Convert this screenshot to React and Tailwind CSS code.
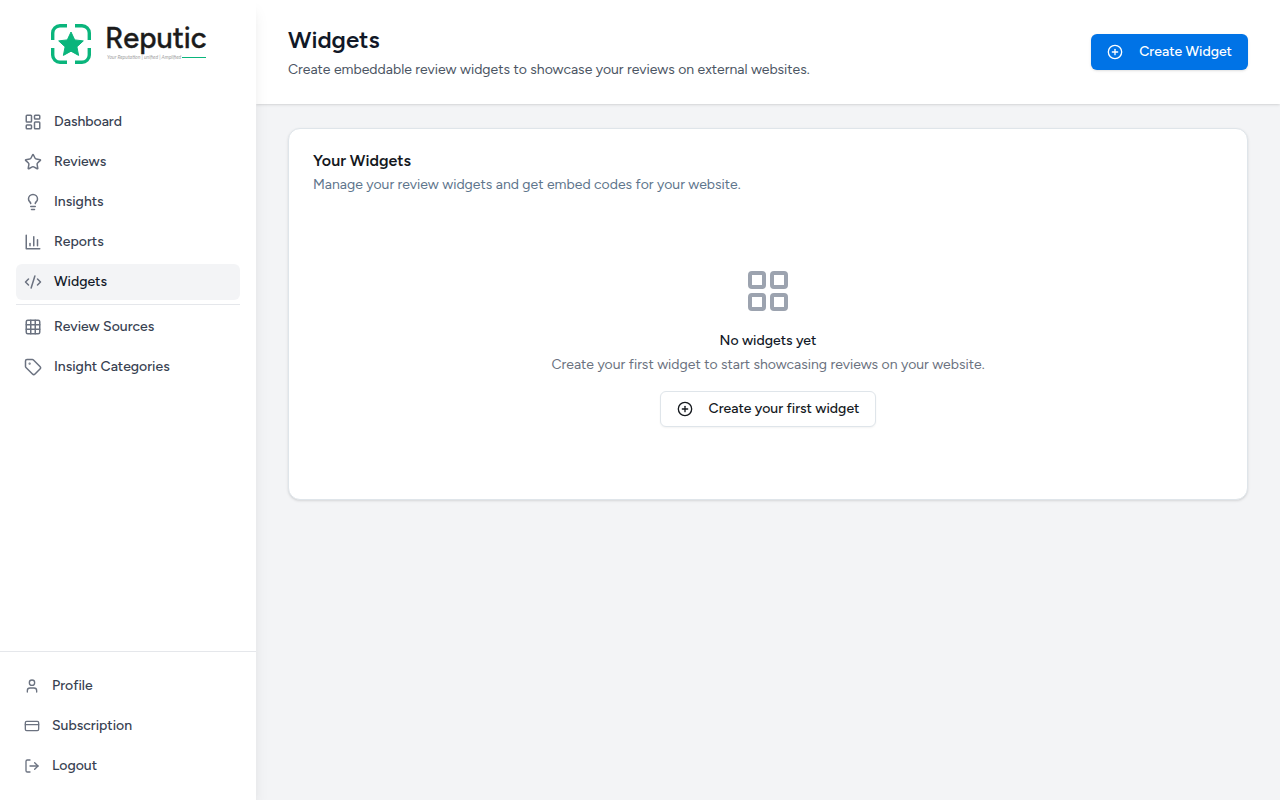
import React from "react";
import { LayoutDashboard, Star, Lightbulb, CodeXml, Grid3x3, Tag, User, CreditCard, LogOut, CirclePlus, LayoutGrid } from "lucide-react";

function ReportsIcon(props) {
  return (
    <svg viewBox="0 0 24 24" fill="none" stroke="currentColor" strokeLinecap="round" strokeLinejoin="round" {...props}>
      <path d="M3 3v18h18" />
      <path d="M18 17V9" />
      <path d="M13 17V5" />
      <path d="M8 17v-3" />
    </svg>
  );
}

const mainItems = [
  { label: "Dashboard", icon: LayoutDashboard },
  { label: "Reviews", icon: Star },
  { label: "Insights", icon: Lightbulb },
  { label: "Reports", icon: ReportsIcon },
  { label: "Widgets", icon: CodeXml, active: true },
];
const setupItems = [
  { label: "Review Sources", icon: Grid3x3 },
  { label: "Insight Categories", icon: Tag },
];
const accountItems = [
  { label: "Profile", icon: User },
  { label: "Subscription", icon: CreditCard },
  { label: "Logout", icon: LogOut },
];

function NavItem({ label, icon: Icon, active, small }) {
  return (
    <a
      href="#"
      aria-current={active ? "page" : undefined}
      className={
        "flex h-9 items-center gap-3 rounded-md px-2 text-sm font-medium " +
        (active ? "bg-[#f3f4f6] text-[#111827]" : "text-[#374151] hover:bg-gray-50")
      }
    >
      <Icon className={"shrink-0 text-[#6b7280] " + (small ? "size-4" : "size-[18px]")} strokeWidth={2} aria-hidden="true" />
      <span>{label}</span>
    </a>
  );
}

function Logo() {
  return (
    <svg viewBox="0 0 156 40" className="h-10 w-[156px] overflow-visible" role="img" aria-label="Reputic">
      <g fill="none" stroke="#0ab57c" strokeWidth="3.4">
        <path d="M2.7 16V9a7.300 7.300 0 0 1 7.300-7.300h7" />
        <path d="M25 1.700h7A7.300 7.300 0 0 1 39.300 9v7" />
        <path d="M39.300 24v7a7.300 7.300 0 0 1-7.300 7.300H25" />
        <path d="M17 38.300H10A7.300 7.300 0 0 1 2.700 31v-7" />
      </g>
      <path
        fill="#0ab57c"
        stroke="#0ab57c"
        strokeLinejoin="round"
        d="M21 8l3.700 7.900 8.600 1-6.400 5.900 1.700 8.600L21 27.200l-7.600 4.200 1.700-8.600-6.400-5.900 8.600-1z"
      />
      <text x="55" y="24" fontFamily="Figtree, Inter, sans-serif" fontSize="29" fontWeight="500" fill="#1b1b1b" stroke="#1b1b1b" strokeWidth="0.4">Reputic</text>
      <text x="57" y="35" fontFamily="Lato, sans-serif" fontStyle="italic" fontSize="5" fill="#a3a3a3">Your Reputation | unified | Amplified</text>
      <path d="M132 33.500h24" stroke="#0ab57c" />
    </svg>
  );
}

export default function App() {
  return (
    <div className="flex min-h-screen bg-[#f3f4f6] font-[Figtree,Lato,sans-serif] text-sm">
      <aside className="relative flex w-64 shrink-0 flex-col bg-white shadow-lg">
        <div className="flex h-[88px] items-center justify-center">
          <Logo />
        </div>
        <nav aria-label="Main" className="flex flex-1 flex-col gap-1 px-4 pt-4">
          {mainItems.map((i) => <NavItem key={i.label} {...i} />)}
          <hr className="border-gray-200" />
          {setupItems.map((i) => <NavItem key={i.label} {...i} />)}
        </nav>
        <nav aria-label="Account" className="flex flex-col gap-1 border-t border-gray-200 p-4">
          {accountItems.map((i) => <NavItem key={i.label} small {...i} />)}
        </nav>
      </aside>
      <div className="min-w-0 flex-1">
        <header className="flex items-center justify-between bg-white px-8 py-6 shadow-sm">
          <div>
            <h1 className="text-2xl font-semibold text-[#111827]">Widgets</h1>
            <p className="mt-1 text-[#4b5563]">Create embeddable review widgets to showcase your reviews on external websites.</p>
          </div>
          <button type="button" className="flex h-9 items-center gap-4 rounded-md bg-[#0073e6] px-4 font-medium text-white shadow-sm">
            <CirclePlus className="size-4" aria-hidden="true" />
            Create Widget
          </button>
        </header>
        <main className="px-8 py-6">
          <section className="rounded-xl border border-[#dfe5ea] bg-white shadow-sm">
            <div className="p-6">
              <h2 className="text-base leading-4 font-semibold text-[#14181d]">Your Widgets</h2>
              <p className="mt-1.5 text-[#5e758c]">Manage your review widgets and get embed codes for your website.</p>
            </div>
            <div className="flex flex-col items-center px-6 pt-12 pb-[72px] text-center">
              <LayoutGrid className="size-12 text-[#9ca3af]" aria-hidden="true" />
              <h3 className="mt-4 font-medium text-[#111827]">No widgets yet</h3>
              <p className="mt-1 text-[#6b7280]">Create your first widget to start showcasing reviews on your website.</p>
              <button type="button" className="mt-4 flex h-9 items-center gap-4 rounded-md border border-[#dfe5ea] bg-white px-4 font-medium text-[#14181d] shadow-xs">
                <CirclePlus className="size-4" aria-hidden="true" />
                Create your first widget
              </button>
            </div>
          </section>
        </main>
      </div>
    </div>
  );
}
